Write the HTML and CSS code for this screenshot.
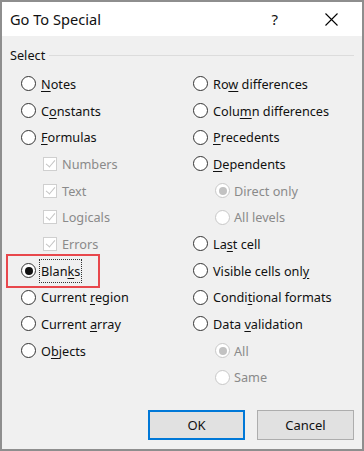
FILE: index.html
```html
<!DOCTYPE html>
<html>
<head>
  <title>Go To Special</title>
  <link rel="stylesheet" href="styles.css">
</head>
<body>
  <div class="window">
    <div class="titlebar">
      <span class="title">Go To Special</span>
      <span class="help">?</span>
      <svg class="close" width="13" height="13" viewBox="0 0 13 13">
        <path d="M0.5 0.5 L12.5 12.5 M12.5 0.5 L0.5 12.5" stroke="#000" stroke-width="1.1" fill="none"/>
      </svg>
    </div>

    <div class="group">
      <div class="legend"><span>Select</span></div>
      <div class="cols">
        <div class="col">
          <div class="row"><span class="radio"></span><span><u>N</u>otes</span></div>
          <div class="row"><span class="radio"></span><span>C<u>o</u>nstants</span></div>
          <div class="row"><span class="radio"></span><span><u>F</u>ormulas</span></div>
          <div class="row sub off"><span class="check"></span><span>Numbers</span></div>
          <div class="row sub off"><span class="check"></span><span>Text</span></div>
          <div class="row sub off"><span class="check"></span><span>Logicals</span></div>
          <div class="row sub off"><span class="check"></span><span>Errors</span></div>
          <div class="row"><span class="radio on"></span><span class="focus">Blan<u>k</u>s</span></div>
          <div class="row"><span class="radio"></span><span>Current <u>r</u>egion</span></div>
          <div class="row"><span class="radio"></span><span>Current <u>a</u>rray</span></div>
          <div class="row"><span class="radio"></span><span>O<u>b</u>jects</span></div>
        </div>
        <div class="col">
          <div class="row"><span class="radio"></span><span>Ro<u>w</u> differences</span></div>
          <div class="row"><span class="radio"></span><span>Colu<u>m</u>n differences</span></div>
          <div class="row"><span class="radio"></span><span><u>P</u>recedents</span></div>
          <div class="row"><span class="radio"></span><span><u>D</u>ependents</span></div>
          <div class="row sub off"><span class="radio on"></span><span>Direct only</span></div>
          <div class="row sub off"><span class="radio"></span><span>All levels</span></div>
          <div class="row"><span class="radio"></span><span>La<u>s</u>t cell</span></div>
          <div class="row"><span class="radio"></span><span>Visible cells onl<u>y</u></span></div>
          <div class="row"><span class="radio"></span><span>Condi<u>t</u>ional formats</span></div>
          <div class="row"><span class="radio"></span><span>Data <u>v</u>alidation</span></div>
          <div class="row sub off"><span class="radio on"></span><span>All</span></div>
          <div class="row sub off"><span class="radio"></span><span>Same</span></div>
        </div>
      </div>
    </div>

    <div class="footer">
      <button type="button" class="btn default">OK</button>
      <button type="button" class="btn">Cancel</button>
    </div>

    <div class="highlight"></div>
  </div>
</body>
</html>
```

FILE: styles.css
```css
html, body {
  margin: 0;
  padding: 0;
}

body {
  font-family: "Noto Sans", "Open Sans", sans-serif;
  font-size: 12.7px;
  color: #111;
}

.window {
  position: relative;
  box-sizing: border-box;
  width: 364px;
  height: 451px;
  border: 2px solid #8e8e8e;
  background: #f0f0f0;
  display: flex;
  flex-direction: column;
}

.titlebar {
  height: 34px;
  background: #fff;
  display: flex;
  align-items: center;
}

.title {
  font-size: 14.6px;
  margin-left: 8px;
  flex: 1;
}

.help {
  font-size: 15px;
  margin-right: 47px;
}

.close {
  margin-right: 24px;
}

.group {
  padding-top: 10px;
}

.legend {
  display: flex;
  align-items: center;
  height: 18px;
  padding-left: 8px;
  padding-right: 8px;
}

.legend::after {
  content: "";
  flex: 1;
  height: 1px;
  background: #dcdcdc;
  margin-left: 4px;
}

.cols {
  display: grid;
  grid-template-columns: 172px 1fr;
  padding-left: 19px;
  margin-top: 6.67px;
}

.row {
  height: 26.67px;
  display: flex;
  align-items: center;
  gap: 5px;
  white-space: nowrap;
}

.row.sub {
  padding-left: 22px;
  gap: 4px;
}

.off {
  color: #8a8a8a;
}

u {
  text-underline-offset: 2px;
}

.radio {
  box-sizing: border-box;
  width: 15px;
  height: 15px;
  border: 1px solid #333;
  border-radius: 50%;
  background: #fff;
  display: flex;
  align-items: center;
  justify-content: center;
  flex: none;
}

.radio.on::after {
  content: "";
  width: 8px;
  height: 8px;
  border-radius: 50%;
  background: #111;
}

.off .radio {
  border-color: #c8c8c8;
}

.off .radio.on::after {
  background: #c2c2c2;
}

.check {
  box-sizing: border-box;
  width: 14px;
  height: 14px;
  border: 1px solid #cfcfcf;
  background: #fff;
  position: relative;
  flex: none;
  margin-right: 1px;
}

.check::after {
  content: "";
  position: absolute;
  left: 3.5px;
  top: 0;
  width: 4px;
  height: 8px;
  border-right: 1.3px solid #c4c4c4;
  border-bottom: 1.3px solid #c4c4c4;
  transform: rotate(40deg);
}

.focus {
  outline: 1px dotted #333;
  padding: 2px 1px;
  margin-left: -1px;
}

.footer {
  margin-top: auto;
  display: flex;
  justify-content: flex-end;
  gap: 12px;
  padding: 0 8px 9px 0;
}

.btn {
  box-sizing: border-box;
  width: 97px;
  height: 30px;
  font-family: inherit;
  font-size: 13px;
  color: #111;
  background: #e1e1e1;
  border: 1px solid #adadad;
  border-radius: 0;
}

.btn.default {
  border: 2px solid #0078d7;
}

.highlight {
  position: absolute;
  left: 4px;
  top: 252px;
  width: 90px;
  height: 30px;
  border: 2px solid #e8474c;
}
```
